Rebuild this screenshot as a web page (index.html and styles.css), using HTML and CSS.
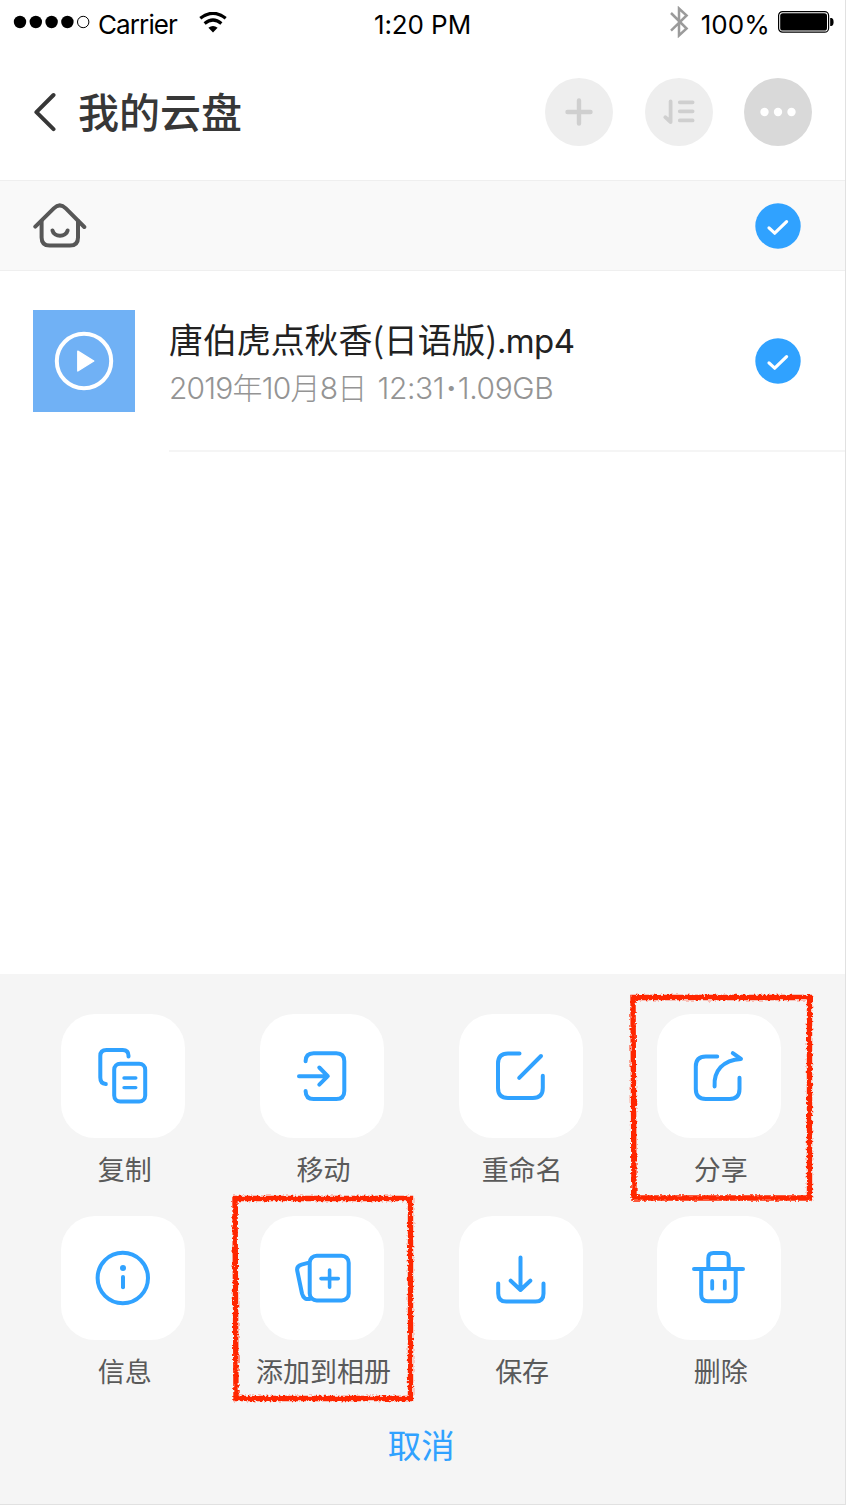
FILE: index.html
```html
<!DOCTYPE html>
<html lang="zh-CN">
<head>
  <meta charset="UTF-8">
  <meta name="viewport" content="width=device-width, initial-scale=1.0">
  <title>我的云盘</title>
  <link rel="stylesheet" href="styles.css">
</head>
<body>

  <div class="phone">

    <div class="status-bar">
      <div class="status-left">
        <svg class="signal" width="77" height="14" viewBox="0 0 77 14">
          <circle cx="7" cy="7" r="6.2"/>
          <circle cx="22.8" cy="7" r="6.2"/>
          <circle cx="38.6" cy="7" r="6.2"/>
          <circle cx="54.4" cy="7" r="6.2"/>
          <circle cx="70.2" cy="7" r="5.7" fill="none" stroke="#000" stroke-width="1"/>
        </svg>
        <span class="carrier">Carrier</span>
        <svg class="wifi" width="28" height="22" viewBox="0 0 28 22">
          <path d="M1.3 6.2Q14-3.6 26.7 6.2" fill="none" stroke="#000" stroke-width="3.2"/>
          <path d="M5.6 11.4Q14 4.6 22.4 11.4" fill="none" stroke="#000" stroke-width="3.2"/>
          <path d="M9.4 15.8Q14 12 18.6 15.8L14 20.6Z"/>
        </svg>
      </div>
      <div class="time">1:20 PM</div>
      <div class="status-right">
        <svg class="bluetooth" width="20" height="32" viewBox="0 0 20 32">
          <path d="M2 7L17.6 22.5L10 29.5V2.5L17.6 9.5L2 24.6" fill="none" stroke="#9b9b9b" stroke-width="2.5"/>
        </svg>
        <span class="percent">100%</span>
        <svg class="battery" width="56" height="22" viewBox="0 0 56 22">
          <rect x="0.6" y="0.6" width="50" height="20.6" rx="4" fill="none" stroke="#000" stroke-width="1.2"/>
          <rect x="2.2" y="2.2" width="46.8" height="17.4" rx="2.6"/>
          <path d="M52.2 7H53.5Q55.6 7.6 55.6 11T53.5 15H52.2Z"/>
        </svg>
      </div>
    </div>

    <header>
      <svg class="back" width="24" height="40" viewBox="0 0 24 40">
        <path d="M20.5 3L3.4 20.2L20.5 37.2" fill="none" stroke="#373737" stroke-width="4" stroke-linecap="round" stroke-linejoin="round"/>
      </svg>
      <h1>我的云盘</h1>
      <div class="header-actions">
        <button class="round-btn">
          <svg width="68" height="68" viewBox="0 0 68 68">
            <path d="M34 22.5V45.5M22.5 34H45.5" stroke="#cfcfcf" stroke-width="4.4" stroke-linecap="round"/>
          </svg>
        </button>
        <button class="round-btn">
          <svg width="68" height="68" viewBox="0 0 68 68" fill="none" stroke="#cfcfcf" stroke-width="3.8" stroke-linecap="round" stroke-linejoin="round">
            <path d="M25.6 23.5V44L20.3 39.2M34.8 24.3H47.6M34.8 33.3H47.6M34.8 42.4H47.6"/>
          </svg>
        </button>
        <button class="round-btn active">
          <svg width="68" height="68" viewBox="0 0 68 68" fill="#fff">
            <circle cx="20.5" cy="34" r="4.2"/>
            <circle cx="34" cy="34" r="4.2"/>
            <circle cx="47.5" cy="34" r="4.2"/>
          </svg>
        </button>
      </div>
    </header>

    <div class="path-bar">
      <svg class="home" width="54" height="46" viewBox="0 0 54 46" fill="none" stroke="#575757" stroke-width="4" stroke-linecap="round" stroke-linejoin="round">
        <path d="M2.3 23.6L20.8 5.4Q26.8-0.5 32.8 5.4L51.3 24"/>
        <path d="M8.6 18V34.5Q8.6 42.5 16.6 42.5H37Q45 42.5 45 34.5V18"/>
        <path d="M19.5 27.5C21 34.5 33 34.5 34.6 27.5"/>
      </svg>
      <svg class="check" width="46" height="46" viewBox="0 0 46 46">
        <circle cx="23" cy="23" r="22.7" fill="#30a2ff"/>
        <path d="M14 24.9L19.7 30.2L31.6 18.6" fill="none" stroke="#fff" stroke-width="3.2" stroke-linecap="round" stroke-linejoin="round"/>
      </svg>
    </div>

    <div class="file-row">
      <div class="thumb">
        <svg width="60" height="60" viewBox="0 0 60 60">
          <circle cx="30" cy="30" r="27.2" fill="none" stroke="#fff" stroke-width="4"/>
          <path d="M23.8 20.2L39.8 30L23.8 40Z" fill="#fff" stroke="#fff" stroke-width="1.4" stroke-linejoin="round"/>
        </svg>
      </div>
      <div class="file-body">
        <div class="file-info">
          <div class="file-name">唐伯虎点秋香(日语版)<span class="ext">.mp4</span></div>
          <div class="file-meta"><span class="date">2019年10月8日</span> 12:31<span class="dot">·</span>1.09GB</div>
        </div>
        <svg class="check" width="46" height="46" viewBox="0 0 46 46">
          <circle cx="23" cy="23" r="22.7" fill="#30a2ff"/>
          <path d="M14 24.9L19.7 30.2L31.6 18.6" fill="none" stroke="#fff" stroke-width="3.2" stroke-linecap="round" stroke-linejoin="round"/>
        </svg>
      </div>
    </div>

    <div class="sheet">
      <div class="actions">
        <div class="action">
          <div class="tile">
            <svg viewBox="0 0 124 124">
              <path d="M67.5 42.5V41.8Q67.5 36 61.7 36H45.5Q39.3 36 39.3 42V63.5Q39.3 69.6 44.8 70"/>
              <rect x="53.2" y="49.7" width="31" height="37.8" rx="6"/>
              <path d="M63 64H74.8M63 73.6H74.8" stroke-width="3.4"/>
            </svg>
          </div>
          <span>复制</span>
        </div>
        <div class="action">
          <div class="tile">
            <svg viewBox="0 0 124 124">
              <path d="M45.6 47.3Q45.6 39.3 53.6 39.3H76.3Q84.3 39.3 84.3 47.3V77Q84.3 85 76.3 85H53.6Q45.6 85 45.6 77"/>
              <path d="M39 62.2H67.5M59.3 53.5L67.8 62.2L59.3 70.7"/>
            </svg>
          </div>
          <span>移动</span>
        </div>
        <div class="action">
          <div class="tile">
            <svg viewBox="0 0 124 124">
              <path d="M60.5 39.5H49Q39 39.5 39 49.5V74Q39 84 49 84H73.8Q83.8 84 83.8 74V61.7"/>
              <path d="M60.2 63.9L82 42"/>
            </svg>
          </div>
          <span>重命名</span>
        </div>
        <div class="action">
          <div class="tile">
            <svg viewBox="0 0 124 124">
              <path d="M60.2 42.5H48.8Q38.8 42.5 38.8 52.5V75Q38.8 85 48.8 85H72.5Q82.5 85 82.5 75V63.8"/>
              <path d="M57.6 72.4C56.5 57 66 45.8 84 44.9L75.8 39.2"/>
            </svg>
          </div>
          <span>分享</span>
          <svg class="marker" width="190" height="214" viewBox="0 0 190 214">
            <path d="M7 6.5H183.5V207H8Z"/>
          </svg>
        </div>
        <div class="action">
          <div class="tile">
            <svg viewBox="0 0 124 124">
              <circle cx="61.8" cy="62" r="25.2"/>
              <path d="M62 61V71.2"/>
              <circle class="solid" cx="62" cy="51.9" r="3"/>
            </svg>
          </div>
          <span>信息</span>
        </div>
        <div class="action">
          <div class="tile">
            <svg viewBox="0 0 124 124">
              <rect x="49.7" y="39.7" width="39" height="44.8" rx="7"/>
              <path d="M49 46.6L41.5 48.6Q36.2 50 37.3 55L42 77.5Q43.8 84.8 51 82.6"/>
              <path d="M61 62.6H78.3M69.6 54V71.3" stroke-width="3.6"/>
            </svg>
          </div>
          <span>添加到相册</span>
          <svg class="marker" width="190" height="214" viewBox="0 0 190 214">
            <path d="M6 5.5H181.5V205.5H7Z"/>
          </svg>
        </div>
        <div class="action">
          <div class="tile">
            <svg viewBox="0 0 124 124">
              <path d="M39.2 67.5V77.5Q39.2 85.5 47.2 85.5H76.5Q84.5 85.5 84.5 77.5V67.5"/>
              <path d="M61.5 41.5V74M51.7 64.7L61.5 74L71.3 64.7"/>
            </svg>
          </div>
          <span>保存</span>
        </div>
        <div class="action">
          <div class="tile">
            <svg viewBox="0 0 124 124">
              <path d="M37 53H86M51.3 53V42.2Q51.3 37 56.5 37H66.5Q71.7 37 71.7 42.2V53"/>
              <path d="M44.2 53V78.5Q44.2 85.3 51 85.3H71.9Q78.7 85.3 78.7 78.5V53"/>
              <path d="M55.2 65V72.7M67.8 65V72.7" stroke-width="3.8"/>
            </svg>
          </div>
          <span>删除</span>
        </div>
      </div>
      <div class="cancel">取消</div>
    </div>

  </div>

  <!-- rough crayon edge for the marker frames -->
  <svg class="defs" width="0" height="0">
    <filter id="crayon" x="-5%" y="-5%" width="110%" height="110%">
      <feTurbulence type="fractalNoise" baseFrequency="0.4" numOctaves="2" seed="4" result="noise"/>
      <feDisplacementMap in="SourceGraphic" in2="noise" scale="4.5" xChannelSelector="R" yChannelSelector="G"/>
    </filter>
  </svg>

</body>
</html>
```

FILE: styles.css
```css
* {
  margin: 0;
  padding: 0;
  box-sizing: border-box;
}

body {
  background: #fff;
  font-family: Inter, "Noto Sans CJK SC", sans-serif;
}

svg {
  display: block;
  flex-shrink: 0;
}

.phone {
  width: 846px;
  height: 1505px;
  display: flex;
  flex-direction: column;
  border-right: 1px solid #e1e1e1;
  border-bottom: 1px solid #e1e1e1;
  overflow: hidden;
}

/* status bar */
.status-bar {
  height: 46px;
  display: grid;
  grid-template-columns: 1fr auto 1fr;
  align-items: center;
  padding: 2px 11px 0 13px;
  font-size: 26px;
  color: #000;
}

.status-left,
.status-right {
  display: flex;
  align-items: center;
}

.status-right {
  justify-content: flex-end;
}

.signal {
  margin-bottom: 4px;
}

.carrier {
  margin-left: 8px;
  letter-spacing: -0.9px;
}

.wifi {
  margin: 0 0 3px 22px;
}

.time {
  padding: 1px 2px 0 0;
  letter-spacing: -0.1px;
}

.bluetooth {
  margin: 0 12px 4px 0;
}

.percent {
  margin-right: 8px;
  letter-spacing: 0.1px;
}

.battery {
  margin-bottom: 4px;
}

/* title */
header {
  height: 134px;
  display: flex;
  align-items: center;
  padding: 0 33px 2px 33px;
}

header h1 {
  margin-left: 21px;
  padding-top: 2px;
  font-size: 41px;
  font-weight: 500;
  line-height: 60px;
  color: #373737;
}

.header-actions {
  display: flex;
  gap: 31.5px;
  margin-left: auto;
}

.round-btn {
  width: 68px;
  height: 68px;
  border: none;
  border-radius: 50%;
  background: #eee;
}

.round-btn.active {
  background: #d9d9d9;
}

.path-bar {
  height: 91px;
  display: flex;
  align-items: center;
  justify-content: space-between;
  padding: 0 44px 0 33px;
  background: #f9f9f9;
  border-top: 1px solid #efefef;
  border-bottom: 1px solid #efefef;
}

/* file list */
.file-row {
  height: 181px;
  display: flex;
  align-items: center;
  padding-left: 33px;
}

.thumb {
  width: 102px;
  height: 102px;
  display: flex;
  align-items: center;
  justify-content: center;
  margin-bottom: 2px;
  background: #70b1f5;
}

.file-body {
  flex: 1;
  height: 181px;
  display: flex;
  align-items: center;
  justify-content: space-between;
  margin-left: 34px;
  padding-right: 44px;
  border-bottom: 2px solid #f5f5f5;
}

.file-info {
  padding-top: 3px;
}

.file-name {
  font-family: "Noto Sans CJK SC", sans-serif;
  font-size: 34px;
  line-height: 50px;
  letter-spacing: -0.1px;
  color: #222;
}

.ext {
  font-family: Inter, sans-serif;
  font-size: 33px;
  letter-spacing: -0.6px;
}

.file-meta {
  font-size: 30px;
  font-weight: 300;
  line-height: 44px;
  letter-spacing: -0.4px;
  color: #949494;
}

.date {
  margin-right: 3px;
  letter-spacing: -0.8px;
}

.dot {
  margin: 0 2px;
  font-weight: 700;
}

/* bottom sheet */
.sheet {
  margin-top: auto;
  height: 530px;
  padding: 40px 26.4px 0 24px;
  background: #f5f5f5;
}

.actions {
  display: grid;
  grid-template-columns: repeat(4, 1fr);
  grid-auto-rows: 202px;
}

.action {
  position: relative;
  display: flex;
  flex-direction: column;
  align-items: center;
}

.action span {
  margin-top: 13px;
  padding-left: 3px;
  font-size: 27px;
  line-height: 40px;
  color: #5a5a5a;
}

.tile {
  width: 124px;
  height: 124px;
  border-radius: 34px;
  background: #fff;
}

.tile svg {
  fill: none;
  stroke: #30a2ff;
  stroke-width: 4;
  stroke-linecap: round;
  stroke-linejoin: round;
}

.tile .solid {
  fill: #30a2ff;
  stroke: none;
}

.marker {
  position: absolute;
  top: -23px;
  left: 6px;
  z-index: 1;
}

.marker path {
  fill: none;
  stroke: #ff2600;
  stroke-width: 5.4;
  filter: url(#crayon);
}

.cancel {
  margin-top: 4px;
  font-size: 33.5px;
  line-height: 48px;
  text-align: center;
  color: #30a2ff;
}

.defs {
  position: absolute;
}
```
